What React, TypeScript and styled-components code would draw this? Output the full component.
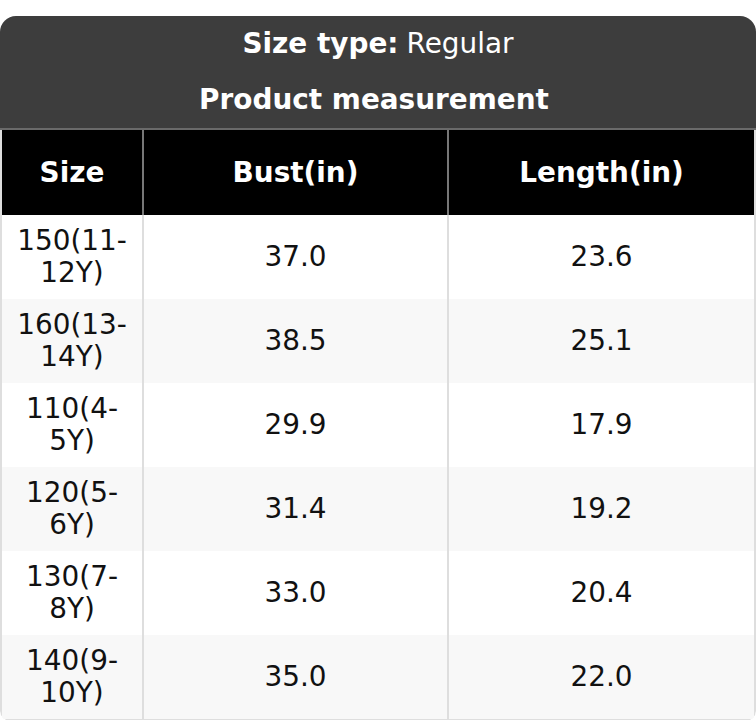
import { FC } from 'react';
import styled, { createGlobalStyle } from 'styled-components';

interface SizeRow {
  size: string;
  bust: string;
  length: string;
}

const rows: SizeRow[] = [
  { size: '150(11-12Y)', bust: '37.0', length: '23.6' },
  { size: '160(13-14Y)', bust: '38.5', length: '25.1' },
  { size: '110(4-5Y)', bust: '29.9', length: '17.9' },
  { size: '120(5-6Y)', bust: '31.4', length: '19.2' },
  { size: '130(7-8Y)', bust: '33.0', length: '20.4' },
  { size: '140(9-10Y)', bust: '35.0', length: '22.0' },
];

const GlobalStyle = createGlobalStyle`
  * { box-sizing: border-box; }
  body {
    margin: 0;
    background: #fff;
    font-family: 'DejaVu Sans', 'Liberation Sans', sans-serif;
  }
`;

const Page = styled('div')`
  padding-top: 16px;
  width: 756px;
`;

const Card = styled('div')`
  display: flex;
  flex-direction: column;
  border-radius: 16px 16px 10px 10px;
  overflow: hidden;
`;

const TitleBar = styled('div')`
  display: flex;
  flex-direction: column;
  background: #3d3d3d;
  color: #fff;
  border-bottom: 2px solid #6a6a6a;
`;

const TitleLine = styled('div')`
  height: 56px;
  display: flex;
  align-items: center;
  justify-content: center;
  font-size: 27.9px;
  font-weight: 400;
  line-height: 32px;

  b {
    font-weight: 700;
    margin-right: 8px;
  }
`;

const Grid = styled('div')`
  display: grid;
  grid-template-columns: 142px 1fr 1fr;
  border: 2px solid #dedede;
  border-top: none;
  border-radius: 0 0 10px 10px;
`;

const HeadCell = styled('div')<{ $last?: boolean }>`
  height: 85px;
  display: flex;
  align-items: center;
  justify-content: center;
  background: #000;
  color: #fff;
  font-size: 27.9px;
  font-weight: 700;
  border-right: ${(p) => (p.$last ? 'none' : '2px solid #777')};
`;

const Cell = styled('div')<{ $alt: boolean; $last?: boolean }>`
  min-height: 84px;
  padding: 10px 14px;
  display: flex;
  align-items: center;
  justify-content: center;
  text-align: center;
  background: ${(p) => (p.$alt ? '#f8f8f8' : '#fff')};
  color: #111;
  font-size: 27.9px;
  line-height: 32px;
  border-right: ${(p) => (p.$last ? 'none' : '2px solid #dedede')};
`;

export const SizeChart: FC = () => (
  <Card>
    <TitleBar>
      <TitleLine>
        <b>Size type:</b>Regular
      </TitleLine>
      <TitleLine>
        <b>Product measurement</b>
      </TitleLine>
    </TitleBar>
    <Grid>
      <HeadCell>Size</HeadCell>
      <HeadCell>Bust(in)</HeadCell>
      <HeadCell $last>Length(in)</HeadCell>
      {rows.map((row, index) => {
        const alt = index % 2 === 1;
        return [
          <Cell key={`size_${row.size}`} $alt={alt}>
            {row.size}
          </Cell>,
          <Cell key={`bust_${row.size}`} $alt={alt}>
            {row.bust}
          </Cell>,
          <Cell key={`length_${row.size}`} $alt={alt} $last>
            {row.length}
          </Cell>,
        ];
      })}
    </Grid>
  </Card>
);

export default function App() {
  return (
    <Page>
      <GlobalStyle />
      <SizeChart />
    </Page>
  );
}
